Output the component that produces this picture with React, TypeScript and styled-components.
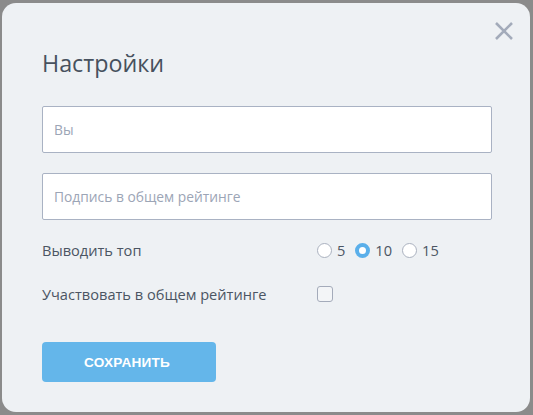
import styled, { createGlobalStyle } from "styled-components";

const GlobalStyle = createGlobalStyle`
  html, body {
    margin: 0;
    background: #8b8b8b;
  }
  * {
    box-sizing: border-box;
  }
`;

const Modal = styled("div")`
  position: relative;
  margin: 3px 0 0 2px;
  width: 528px;
  height: 409px;
  background: #eef1f4;
  border-radius: 14px;
  padding: 40px 38px 0 40px;
  font-family: "Open Sans", "Liberation Sans", sans-serif;
  color: #4b5563;
`;

const Close = styled("button")`
  position: absolute;
  top: 18px;
  right: 16px;
  width: 20px;
  height: 20px;
  padding: 0;
  border: none;
  background: none;
  cursor: pointer;
`;

const Title = styled("h2")`
  margin: 0 0 23px;
  font-size: 23.3px;
  line-height: 40px;
  font-weight: 400;
  color: #47515e;
`;

const Field = styled("input")`
  display: block;
  width: 450px;
  height: 47px;
  margin-bottom: 20px;
  padding: 0 11px;
  border: 1px solid #a9b2c3;
  border-radius: 2px;
  background: #fff;
  font-family: inherit;
  font-size: 13.8px;
  color: #4b5563;
  outline: none;

  &::placeholder {
    color: #9ca5b6;
  }
`;

const Options = styled("div")`
  display: grid;
  grid-template-columns: 275px 1fr;
  row-gap: 24px;
  align-items: center;
  font-size: 14.6px;
  margin-top: 20px;
`;

const Label = styled("div")`
  line-height: 20px;
`;

const RadioGroup = styled("div")`
  display: flex;
  align-items: center;
  gap: 10px;
`;

const RadioItem = styled("label")`
  display: flex;
  align-items: center;
  gap: 5px;
  line-height: 20px;
`;

const Dot = styled("span")<{ $checked?: boolean }>`
  width: 15px;
  height: 15px;
  border-radius: 50%;
  background: #fff;
  border: ${({ $checked }) => ($checked ? "4px solid #5aafea" : "1px solid #aab1bf")};
`;

const Check = styled("span")`
  display: block;
  width: 16px;
  height: 16px;
  border: 1px solid #a4abba;
  border-radius: 3px;
  background: #f3f5f7;
`;

const SaveButton = styled("button")`
  margin-top: 38px;
  width: 174px;
  height: 40px;
  padding: 0 4px 0 0;
  border: none;
  border-radius: 4px;
  background: #64b6ea;
  color: #fff;
  font-family: "Liberation Sans", Arial, sans-serif;
  font-weight: 700;
  font-size: 13.6px;
  letter-spacing: 0.2px;
  cursor: pointer;
`;

const tops = [5, 10, 15];

export default function App() {
  return (
    <>
      <GlobalStyle />
      <Modal>
        <Close aria-label="Закрыть">
          <svg width="20" height="20" viewBox="0 0 20 20">
            <path d="M2 2 L18 18 M18 2 L2 18" stroke="#a3abba" strokeWidth="2.6" strokeLinecap="butt" />
          </svg>
        </Close>
        <Title>Настройки</Title>
        <Field placeholder="Вы" />
        <Field placeholder="Подпись в общем рейтинге" />
        <Options>
          <Label>Выводить топ</Label>
          <RadioGroup>
            {tops.map(n => (
              <RadioItem key={n}>
                <Dot $checked={n === 10} />
                {n}
              </RadioItem>
            ))}
          </RadioGroup>
          <Label>Участвовать в общем рейтинге</Label>
          <div>
            <Check />
          </div>
        </Options>
        <SaveButton>СОХРАНИТЬ</SaveButton>
      </Modal>
    </>
  );
}
